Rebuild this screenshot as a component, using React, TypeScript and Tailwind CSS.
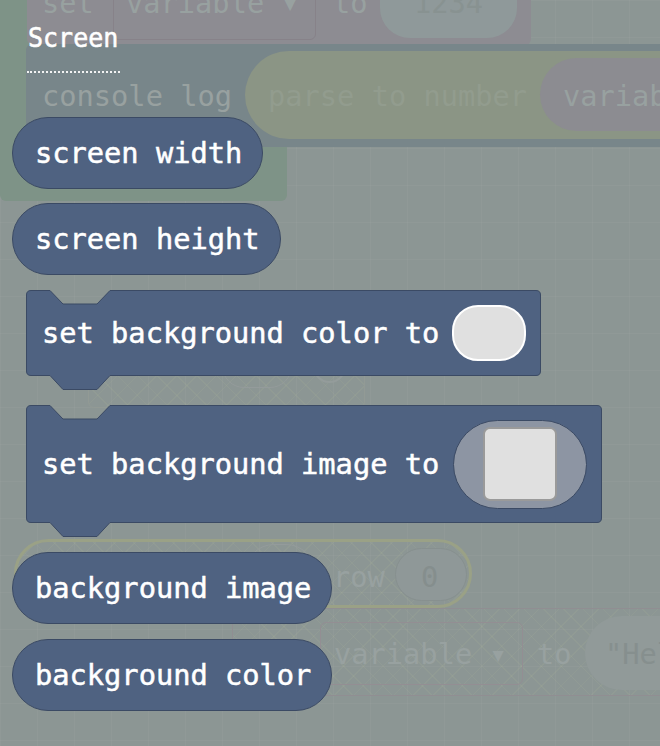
import React from "react";

const FONT = { fontFamily: '"DejaVu Sans Mono", "Liberation Mono", monospace' };

function StatementShape({ w, h }: { w: number; h: number }) {
  const r = 5;
  const d = `M0.5,${r} Q0.5,0.5 ${r},0.5 H24 L37,14 H71 L84,0.5 H${w - r} Q${w - 0.5},0.5 ${w - 0.5},${r} V${h - r} Q${w - 0.5},${h - 0.5} ${w - r},${h - 0.5} H84 L71,${h + 13.5} H37 L24,${h - 0.5} H${r} Q0.5,${h - 0.5} 0.5,${h - r} Z`;
  return (
    <svg className="absolute left-0 top-0 overflow-visible" width={w} height={h + 15}>
      <path d={d} fill="#4f6281" stroke="#3b4a64" strokeWidth="1" strokeLinejoin="round" />
    </svg>
  );
}

const label = "text-[28.7px] leading-none text-white [-webkit-text-stroke:0.5px_white]";

function Pill({ text, className }: { text: string; className?: string }) {
  return (
    <div
      className={`h-[72px] self-start rounded-full border border-[#3b4a64] bg-[#4f6281] pl-[22px] pr-[20px] flex items-center ${className ?? ""}`}
    >
      <span className={label}>{text}</span>
    </div>
  );
}

const hatch =
  "bg-[repeating-linear-gradient(45deg,rgba(190,200,150,0.09)_0px,rgba(190,200,150,0.09)_1px,transparent_1px,transparent_14px),repeating-linear-gradient(-45deg,rgba(190,200,150,0.09)_0px,rgba(190,200,150,0.09)_1px,transparent_1px,transparent_14px)]";

function Ghosts() {
  const t = "absolute text-[28.7px] leading-none text-[#98a1a0]";
  return (
    <div className="absolute inset-0" style={FONT}>
      {/* green block */}
      <div className="absolute left-0 top-[-40px] w-[287px] h-[241px] rounded-md bg-[#7e9387]" />
      {/* mauve set variable block */}
      <div className="absolute left-[27px] top-[-30px] w-[504px] h-[75px] rounded-md bg-[#8d8c92]" />
      <svg className="absolute left-[50px] top-[44px]" width="60" height="16">
        <path d="M4,0 L17,13 H50 L60,0 Z" fill="#8d8c92" />
      </svg>
      <div className={`${t} left-[42px] top-[-11px]`}>set</div>
      <div className="absolute left-[113px] top-[-20px] w-[203px] h-[60px] rounded-md border border-[#878289]" />
      <div className={`${t} left-[126px] top-[-11px]`}>variable ▾</div>
      <div className={`${t} left-[333px] top-[-11px]`}>to</div>
      <div className="absolute left-[380px] top-[-30px] w-[137px] h-[68px] rounded-[30px] bg-[#8f999a]" />
      <div className={`${t} left-[414px] top-[-11px] text-[#889291]`}>1234</div>

      {/* console log block */}
      <div className="absolute left-[26px] top-[44px] w-[700px] h-[103px] rounded-md bg-[#78868a]" />
      <div className={`${t} left-[42px] top-[82px]`}>console log</div>
      <div className="absolute left-[245px] top-[51px] w-[500px] h-[88px] rounded-full bg-[#8b9585]" />
      <div className={`${t} left-[268px] top-[82px] text-[#929c8e]`}>parse to number</div>
      <div className="absolute left-[540px] top-[58px] w-[200px] h-[73px] rounded-full bg-[#8c8c91]" />
      <div className={`${t} left-[563px] top-[82px]`}>variable</div>

      {/* ghost behind set background color */}
      <div className={`absolute left-[88px] top-[340px] w-[277px] h-[68px] rounded-md border border-[#929a95] ${hatch}`} />
      <div className="absolute left-[222px] top-[330px] w-[70px] h-[58px] rounded-[22px] border border-[#949b9b]" />
      <div className="absolute left-[313px] top-[345px] w-[33px] h-[38px] rounded-full border-2 border-[#949c9b]" />

      {/* yellow outlined pill */}
      <div className={`absolute left-[14px] top-[539px] w-[458px] h-[69px] rounded-full border-[3px] border-[#9aa186] ${hatch}`} />
      <div className="absolute left-[245px] top-[544px] w-[70px] h-[58px] rounded-full border border-[#949b9b]" />
      <div className={`${t} left-[333px] top-[563px]`}>row</div>
      <div className="absolute left-[395px] top-[548px] w-[72px] h-[53px] rounded-full bg-[#8f9898] border border-[#87908f]" />
      <div className={`${t} left-[421px] top-[563px] text-[#858e8d]`}>0</div>

      {/* hatched set block at bottom */}
      <div className={`absolute left-[232px] top-[608px] w-[500px] h-[88px] rounded-md border border-[#908e92] ${hatch}`} />
      <div className="absolute left-[320px] top-[622px] w-[203px] h-[63px] rounded-md border border-[#938e93]" />
      <div className={`${t} left-[334px] top-[640px]`}>variable ▾</div>
      <div className={`${t} left-[537px] top-[640px]`}>to</div>
      <div className="absolute left-[585px] top-[616px] w-[200px] h-[74px] rounded-full bg-[#919a99]" />
      <div className={`${t} left-[605px] top-[640px] text-[#868f8e]`}>"Hello</div>
    </div>
  );
}

export default function App() {
  return (
    <div
      className="relative w-[660px] h-[746px] overflow-hidden bg-[#8c9694] bg-[linear-gradient(to_right,rgba(255,255,255,0.03)_1px,transparent_1px),linear-gradient(to_bottom,rgba(255,255,255,0.03)_1px,transparent_1px)] bg-[size:37px_37px]"
      style={FONT}
    >
      <Ghosts />
      <div className="relative flex flex-col pl-[12px]">
        <div className="ml-[16px] mt-[23px] text-[25px] leading-[27px] text-white [-webkit-text-stroke:0.5px_white] origin-top scale-y-[1.08]">
          Screen
        </div>
        <div className="ml-[15px] mt-[21px] w-[93px] h-0 border-t-2 border-dotted border-white/90" />
        <Pill text="screen width" className="mt-[44px]" />
        <Pill text="screen height" className="mt-[14px]" />

        <div className="relative ml-[14px] mt-[15px] w-[515px] h-[86px] flex items-center justify-between pl-[16px] pr-[15px]">
          <StatementShape w={515} h={86} />
          <span className={`relative ${label}`}>set background color to</span>
          <div className="relative w-[74px] h-[56px] rounded-[26px] bg-[#e0e0e0] border-2 border-white" />
        </div>

        <div className="relative ml-[14px] mt-[29px] w-[576px] h-[118px] flex items-center justify-between pl-[16px] pr-[15px]">
          <StatementShape w={576} h={118} />
          <span className={`relative ${label}`}>set background image to</span>
          <div className="relative w-[134px] h-[89px] rounded-full bg-[#8d95a3] border border-[#3b4a64] flex items-center justify-center">
            <div className="w-[74px] h-[74px] rounded-[7px] bg-[#e0e0e0] border-2 border-[#9a9a9a]" />
          </div>
        </div>

        <Pill text="background image" className="mt-[29px]" />
        <Pill text="background color" className="mt-[15px]" />
      </div>
    </div>
  );
}
